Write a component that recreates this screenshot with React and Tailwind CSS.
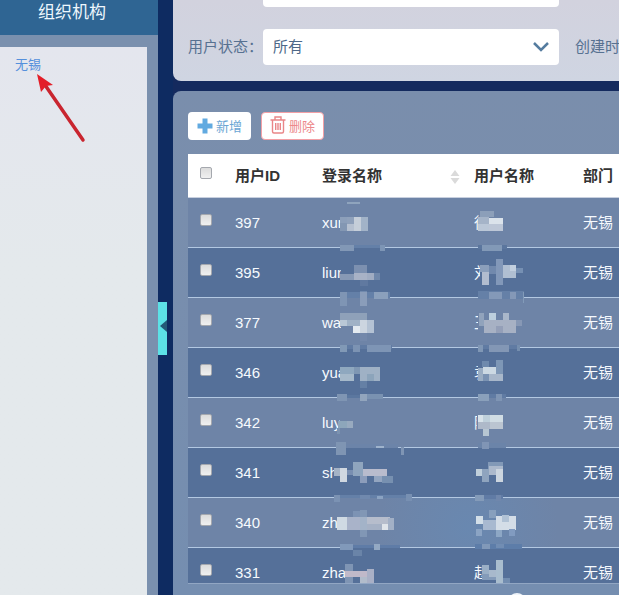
import React from "react";

// Pixelation blocks: [x, y, width, height, colour], relative to the cell.
// The cover value is where the row colour starts to hide the rest of the text.
const rows = [
  {
    id: "397", login: "xun", loginCover: 26, name: "徐", nameCover: 14,
    loginMask: [
      [33, 4, 13, 2, "#8fa4bd"], [26, 19, 7, 6, "#8c9fba"], [26, 25, 7, 8, "#8397b3"], [33, 19, 7, 7, "#8fa1bb"],
      [33, 26, 7, 7, "#b5c0d0"], [40, 19, 7, 14, "#c5ced9"], [47, 19, 7, 14, "#a2b3c8"],
      [26, 47, 45, 3, "#6480a8"], [26, 47, 14, 6, "#8298b6"], [66, 47, 5, 6, "#7d95b5"],
    ],
    nameMask: [
      [14, 13, 14, 6, "#8c9fb9"], [12, 19, 11, 7, "#a5b4c8"], [12, 26, 11, 7, "#bac7d7"], [23, 20, 14, 6, "#dbe3eb"], [23, 26, 14, 7, "#bdc7d7"],
      [12, 47, 29, 4, "#5b769e"], [16, 47, 20, 6, "#8299b7"],
    ],
  },
  {
    id: "395", login: "liun", loginCover: 27, name: "刘", nameCover: 14,
    loginMask: [
      [26, 26, 14, 6, "#8799b5"], [40, 17, 13, 8, "#7c90b0"], [40, 25, 13, 7, "#a8b2c6"], [53, 25, 7, 7, "#a0acc2"],
      [60, 25, 6, 7, "#6f87aa"], [46, 32, 8, 6, "#6079a0"], [46, 43, 7, 4, "#7089ad"],
      [26, 44, 50, 6, "#6480a8"], [26, 44, 7, 14, "#7f95b4"], [46, 44, 7, 14, "#8a9dba"], [60, 44, 14, 7, "#8ba0bc"],
    ],
    nameMask: [
      [14, 17, 9, 7, "#8b9fbb"], [16, 24, 7, 13, "#b2bdcf"], [23, 18, 7, 8, "#7189ad"], [30, 11, 7, 26, "#8298b9"],
      [37, 17, 13, 13, "#b0bfd2"], [44, 17, 6, 6, "#c2cfdf"], [50, 20, 7, 5, "#7690b3"],
      [12, 43, 46, 8, "#6580a7"], [23, 44, 13, 7, "#8499b8"], [44, 44, 6, 7, "#8498b7"], [57, 44, 1, 11, "#829bb9"],
    ],
  },
  {
    id: "377", login: "wan", loginCover: 27, name: "王", nameCover: 12,
    loginMask: [
      [26, 15, 27, 7, "#8fa1b9"], [26, 22, 7, 6, "#bac8d6"], [33, 22, 20, 6, "#a0b2c6"], [53, 22, 7, 13, "#b4c2d4"],
      [39, 28, 7, 7, "#e3eaf0"], [46, 22, 7, 13, "#ccd5e0"], [46, 35, 7, 8, "#7388ab"],
      [26, 47, 52, 4, "#607ba3"], [26, 47, 7, 7, "#8199b6"], [39, 47, 7, 7, "#7c93b3"], [53, 47, 24, 7, "#7e95b5"],
    ],
    nameMask: [
      [13, 15, 5, 13, "#91a3bc"], [23, 15, 7, 7, "#bdcfdd"], [37, 15, 6, 7, "#a9b7ca"], [18, 22, 32, 13, "#a7b1c4"],
      [30, 28, 7, 7, "#949fb8"], [50, 22, 6, 6, "#8798b5"],
      [12, 47, 42, 4, "#607ba3"], [12, 47, 5, 7, "#8097b5"], [23, 47, 20, 7, "#8397b5"], [51, 47, 3, 6, "#758eae"],
    ],
  },
  {
    id: "346", login: "yua", loginCover: 28, name: "袁", nameCover: 12,
    loginMask: [
      [26, 19, 14, 7, "#8fa8bf"], [40, 19, 6, 7, "#7f97b3"], [26, 26, 14, 7, "#a6b9ca"], [46, 19, 20, 14, "#9fb1c5"],
      [53, 26, 7, 7, "#8ca4bb"], [46, 33, 7, 7, "#6580a5"],
      [24, 47, 45, 3, "#5b779f"], [23, 46, 10, 7, "#7f95b3"], [46, 46, 7, 7, "#92a5bd"], [53, 46, 16, 5, "#7a92b1"],
    ],
    nameMask: [
      [16, 13, 7, 6, "#6f8aad"], [30, 12, 7, 14, "#7e97b6"], [12, 20, 5, 13, "#9aadc3"], [17, 19, 13, 7, "#ccd9e3"],
      [23, 26, 14, 7, "#a8b7ca"], [17, 26, 6, 7, "#7b93b3"],
      [12, 46, 28, 4, "#607ba3"], [12, 46, 11, 7, "#8aa0bb"], [30, 46, 6, 7, "#7f95b4"],
    ],
  },
  {
    id: "342", login: "luy", loginCover: 26, name: "陆", nameCover: 11,
    loginMask: [
      [24, 23, 9, 7, "#8da6bb"], [33, 23, 6, 7, "#98aabf"], [23, 30, 3, 6, "#7b92b0"],
      [22, 46, 62, 4, "#6c84a9"], [22, 44, 10, 13, "#7f95b3"], [62, 48, 8, 2, "#9fb3cc"], [87, 49, 3, 8, "#7f95b4"],
    ],
    nameMask: [
      [12, 17, 5, 7, "#d8e3ea"], [17, 17, 7, 7, "#bfd0db"], [24, 17, 13, 7, "#d1dde4"], [12, 24, 12, 7, "#aeb9c9"],
      [24, 24, 13, 7, "#bbc5d1"], [17, 31, 6, 7, "#b7c6d2"], [12, 45, 28, 5, "#6b84a9"], [16, 44, 7, 7, "#8095b5"],
    ],
  },
  {
    id: "341", login: "sh", loginCover: 21, name: "", nameCover: 10,
    loginMask: [
      [20, 20, 13, 8, "#a5b3c6"], [26, 20, 7, 14, "#d0d8e1"], [39, 14, 10, 14, "#8fa5be"], [33, 22, 6, 5, "#798fb1"],
      [49, 21, 24, 7, "#b9bccd"], [46, 28, 7, 7, "#8c9dbb"], [60, 28, 8, 6, "#93a5c0"], [68, 28, 11, 7, "#7790b0"],
      [20, 47, 78, 3, "#6480a8"], [20, 47, 6, 7, "#7b92b3"], [46, 47, 10, 4, "#7089ae"], [63, 48, 6, 3, "#8ba3c2"], [92, 46, 6, 7, "#7890b2"],
    ],
    nameMask: [
      [22, 14, 15, 7, "#8299b7"], [10, 21, 6, 7, "#c0cfdb"], [16, 21, 7, 13, "#8fa4be"], [23, 18, 14, 9, "#acb9cc"],
      [30, 21, 7, 13, "#ccd5df"], [9, 47, 28, 4, "#607ba5"], [9, 47, 9, 6, "#849bb9"], [30, 47, 5, 6, "#7087ac"],
    ],
  },
  {
    id: "340", login: "zh", loginCover: 24, name: "", nameCover: 10,
    loginMask: [
      [23, 19, 10, 13, "#d0dae3"], [33, 19, 13, 13, "#a9b3c9"], [39, 13, 7, 6, "#7d93b4"], [46, 12, 7, 27, "#8197b5"],
      [46, 19, 7, 13, "#a3b3c8"], [53, 19, 23, 7, "#b6bdcc"], [53, 26, 15, 6, "#a5b1c5"], [68, 26, 6, 6, "#dfe4ea"], [74, 20, 6, 12, "#a2b0c6"],
      [26, 47, 60, 3, "#5f7ca7"], [26, 46, 13, 6, "#8199ba"], [60, 46, 6, 6, "#94a9c3"], [39, 52, 9, 6, "#6a84a8"],
    ],
    nameMask: [
      [23, 12, 7, 8, "#879fbd"], [10, 18, 7, 8, "#d3dfe8"], [17, 22, 13, 10, "#a8b9d0"], [30, 18, 20, 14, "#d4dde7"],
      [36, 17, 7, 7, "#b1c2d5"], [10, 31, 6, 7, "#8ba4c4"], [30, 32, 6, 7, "#8da7c5"], [43, 31, 6, 7, "#819bc0"],
      [9, 46, 47, 5, "#5d7da9"], [16, 46, 8, 5, "#8199b9"], [30, 46, 8, 4, "#718db3"],
    ],
  },
  {
    id: "331", login: "zha", loginCover: 32, name: "赵", nameCover: 18,
    loginMask: [
      [31, 16, 8, 20, "#7f95b4"], [31, 23, 29, 6, "#c0b9c9"], [46, 29, 14, 6, "#b1bccb"], [53, 21, 7, 14, "#a9b0c6"],
    ],
    nameMask: [
      [16, 17, 7, 9, "#9aafc6"], [16, 26, 14, 6, "#849bb9"], [23, 22, 7, 7, "#a8b9cc"], [30, 12, 7, 24, "#a9bdce"], [37, 30, 7, 5, "#728db0"],
    ],
  },
];

function Mask({ blocks, cover }) {
  return (
    <svg className="pointer-events-none absolute left-0 top-0 z-10 h-full w-full overflow-visible" shapeRendering="crispEdges" aria-hidden="true">
      {cover && <rect x={cover} y="14" width="14" height="24" className="fill-[#6e84a7] group-even:fill-[#557099]" />}
      {blocks.map(([x, y, w, h, fill], i) => (
        <rect key={i} x={x} y={y} width={w} height={h} fill={fill} />
      ))}
    </svg>
  );
}

function Tick({ label }) {
  return (
    <input
      type="checkbox"
      aria-label={label}
      className="block h-3 w-3 appearance-none rounded-[2px] border border-[#a5a8ae] bg-linear-to-b from-[#dcdcdc] to-[#f0f0f0]"
    />
  );
}

function Sidebar() {
  return (
    <aside className="flex w-[158px] shrink-0 flex-col bg-[#7a90ae]">
      <h2 className="h-[35px] bg-[#2f6593] pr-[14px] text-center text-[17px] leading-[26px] text-[#eef7fd]">组织机构</h2>
      <div className="relative mr-[11px] mt-3 flex-1 bg-linear-to-b from-[#e4e6ee] to-[#e4e9ec] to-40% pl-[15px] pt-2">
        <a href="#wuxi" className="block text-[13px] leading-5 text-[#5590dc]">无锡</a>
        <svg className="absolute left-8 top-6 h-[76px] w-[60px]" viewBox="32 71 60 76" aria-hidden="true">
          <path d="M45 85 83 140" stroke="#c9252f" strokeWidth="3.5" strokeLinecap="round" />
          <path d="M37 74 53 85 46 86 41 92Z" fill="#e31e28" />
        </svg>
      </div>
    </aside>
  );
}

function SearchPanel() {
  return (
    <form className="overflow-hidden rounded-bl-lg bg-linear-to-b from-[#d2d2de] to-[#cfd5e2] pb-4 pl-[15px] text-[15px] text-[#577191]">
      <div className="flex">
        <span className="w-[75px] shrink-0" />
        <input aria-label="登录名称" className="h-[7px] w-[296px] shrink-0 rounded-b bg-white" />
      </div>
      <div className="mt-[22px] flex h-9 items-center">
        <label htmlFor="status" className="w-[75px] shrink-0 whitespace-nowrap">用户状态：</label>
        <div className="relative w-[296px] shrink-0">
          <select id="status" className="block h-9 w-full appearance-none rounded bg-white px-[10px] text-[15px] text-[#4d6888]">
            <option>所有</option>
          </select>
          <svg className="pointer-events-none absolute right-[10px] top-[13px] h-[10px] w-4" viewBox="0 0 16 10" fill="none" stroke="#557c9f" strokeWidth="2.5" aria-hidden="true">
            <path d="m1 1 7 7 7-7" />
          </svg>
        </div>
        <span className="ml-4 whitespace-nowrap">创建时</span>
      </div>
    </form>
  );
}

function Toolbar() {
  return (
    <div className="flex gap-[10px] text-[13px]">
      <button type="button" className="flex h-7 w-[63px] items-center justify-center gap-[3px] whitespace-nowrap rounded bg-white text-[#6ba6d4]">
        <svg className="h-4 w-4" viewBox="0 0 16 16" fill="#62aae0" aria-hidden="true">
          <path d="M5.500 0.500h5v5h5v5h-5v5h-5v-5h-5v-5h5z" />
        </svg>
        <span className="pt-0.5">新增</span>
      </button>
      <button type="button" className="flex h-7 w-[63px] items-center justify-center gap-[3px] whitespace-nowrap rounded border border-[#f3a0a6] bg-white text-[#ed898b]">
        <svg className="mb-0.5 h-[18px] w-4" viewBox="0 0 16 18" fill="none" stroke="#e98688" strokeWidth="1.400" aria-hidden="true">
          <path d="M.5 4h15M5 4V1h6v3M2.500 4v11.500q0 1.500 1.500 1.500h8q1.500 0 1.500-1.500V4M5.700 7v7M8 7v7M10.300 7v7" />
        </svg>
        <span className="pt-0.5">删除</span>
      </button>
    </div>
  );
}

function UserTable() {
  return (
    <table className="w-full table-fixed border-separate border-spacing-0 text-left text-[15px]">
      <colgroup>
        <col className="w-[39px]" />
        <col className="w-[87px]" />
        <col className="w-[152px]" />
        <col className="w-[109px]" />
        <col />
      </colgroup>
      <thead>
        <tr className="h-11 whitespace-nowrap bg-white text-[#333] *:border-b *:border-[#c8d0df]">
          <th className="pb-1.5 pl-3"><Tick label="全选" /></th>
          <th className="pl-2 pt-0.5">用户ID</th>
          <th className="pl-2 pt-0.5">
            <div className="flex items-center justify-between pr-[6px]">
              登录名称
              <svg className="h-[14px] w-[10px]" viewBox="0 0 10 14" fill="#dadada" aria-hidden="true">
                <path d="m5 0 4.500 6h-9zM5 14 .5 8h9z" />
              </svg>
            </div>
          </th>
          <th className="pl-2 pt-0.5">用户名称</th>
          <th className="pl-2 pt-0.5">部门</th>
        </tr>
      </thead>
      <tbody className="text-[#f6fafe]">
        {rows.map((row) => (
          <tr key={row.id} className="group h-[50px] whitespace-nowrap odd:bg-[#6e84a7] even:bg-[#557099] nth-7:bg-radial-[circle_90px_at_280px_30px] nth-7:from-[#6988b0] nth-7:to-[#6e84a7] *:border-b *:border-[#b3c8e2]">
            <td className="pb-1.5 pl-3"><Tick label={row.id} /></td>
            <td className="pl-2 pt-0.5">{row.id}</td>
            <td className="relative pl-2 pt-0.5">
              {row.login}
              <Mask blocks={row.loginMask} cover={row.loginCover} />
            </td>
            <td className="relative pl-2 pt-0.5">
              {row.name}
              <Mask blocks={row.nameMask} cover={row.name && row.nameCover} />
            </td>
            <td className="pl-2 pt-0.5">无锡</td>
          </tr>
        ))}
      </tbody>
    </table>
  );
}

export default function App() {
  return (
    <div className="flex h-screen overflow-hidden bg-[#0e2b61] font-['Liberation_Sans','Noto_Sans_CJK_SC',sans-serif]">
      <Sidebar />
      <div className="flex w-[15px] shrink-0 flex-col pt-[302px]">
        <button type="button" aria-label="收起" className="flex h-[53px] w-[9px] items-center justify-end bg-[#5ce1e6] pb-[6px]">
          <svg className="h-3 w-[7px]" viewBox="0 0 7 12" fill="#245a78" aria-hidden="true">
            <path d="M7 0v12L0 6z" />
          </svg>
        </button>
      </div>
      <main className="flex min-w-0 flex-1 flex-col gap-[10px] bg-[#142a5e]">
        <SearchPanel />
        <section className="relative flex min-h-0 flex-1 flex-col overflow-hidden rounded-tl-lg bg-linear-to-b from-[#7a8eac] to-[#758eb0] pl-[15px] pt-[21px]">
          <Toolbar />
          <div className="mt-[14px] min-h-0 flex-1 overflow-hidden border-b border-[#91a6c3]">
            <UserTable />
          </div>
          <div className="h-[11px] shrink-0" />
          <span className="absolute -bottom-4 left-[335px] h-[18px] w-[18px] rounded-full bg-[#f0f5fa]" />
        </section>
      </main>
    </div>
  );
}
